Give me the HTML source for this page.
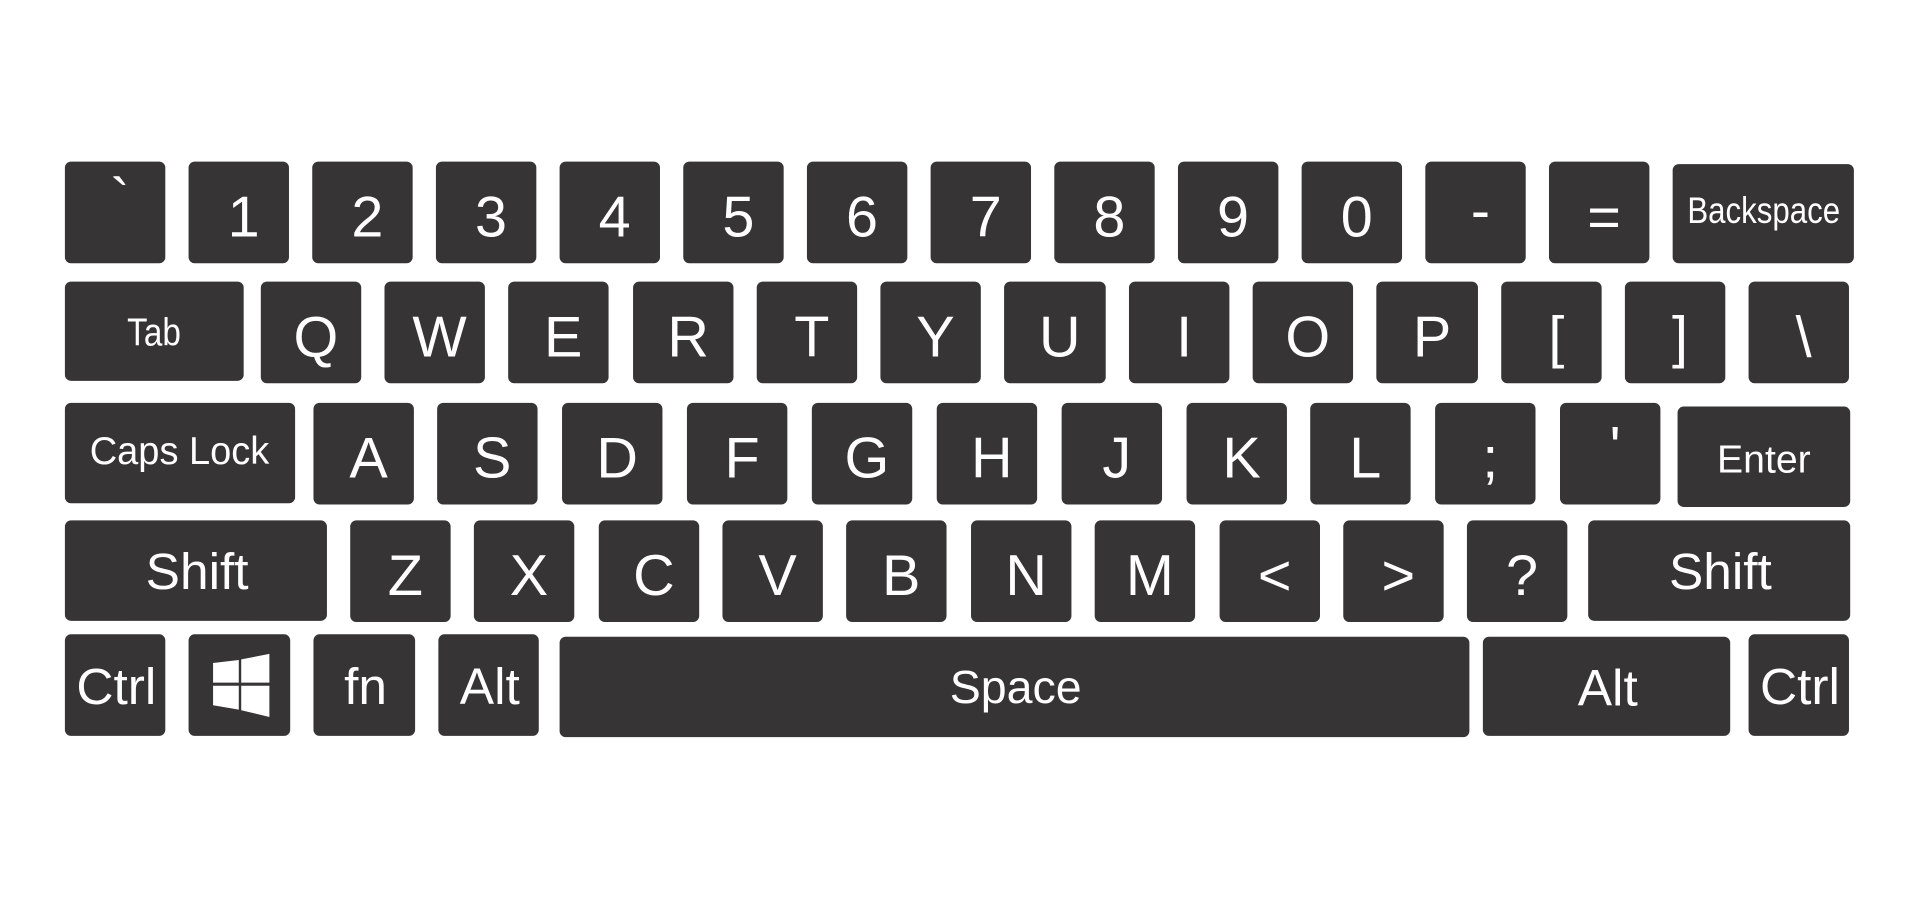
<!DOCTYPE html>
<html><head><style>
html,body{margin:0;padding:0;background:#fff;width:1920px;height:900px;overflow:hidden}
#w{position:absolute;left:0;top:0;width:1568px;height:735px;transform:scale(1.22449);transform-origin:0 0}
.k{position:absolute;background:#363435;border-radius:5px;color:#fff;display:flex;align-items:center;justify-content:center;font-family:"Liberation Sans",sans-serif;font-size:47px;line-height:1;box-sizing:border-box;padding:6px 0 0 8px}
.s{font-size:32px;padding:0}
.m{font-size:42px;padding:2px 0 0 2px}
.c{display:inline-block;transform:scaleX(.85)}
</style></head><body><div id="w">
<!-- row1 -->
<div class="k" style="left:53px;top:132px;width:82px;height:83px"><span style="margin-top:-28px">`</span></div>
<div class="k" style="left:154px;top:132px;width:82px;height:83px">1</div>
<div class="k" style="left:255px;top:132px;width:82px;height:83px">2</div>
<div class="k" style="left:356px;top:132px;width:82px;height:83px">3</div>
<div class="k" style="left:457px;top:132px;width:82px;height:83px">4</div>
<div class="k" style="left:558px;top:132px;width:82px;height:83px">5</div>
<div class="k" style="left:659px;top:132px;width:82px;height:83px">6</div>
<div class="k" style="left:760px;top:132px;width:82px;height:83px">7</div>
<div class="k" style="left:861px;top:132px;width:82px;height:83px">8</div>
<div class="k" style="left:962px;top:132px;width:82px;height:83px">9</div>
<div class="k" style="left:1063px;top:132px;width:82px;height:83px">0</div>
<div class="k" style="left:1164px;top:132px;width:82px;height:83px"><span style="margin-top:-10px">-</span></div>
<div class="k" style="left:1265px;top:132px;width:82px;height:83px">=</div>
<div class="k s" style="left:1366px;top:134px;width:148px;height:81px;font-size:30px"><span class="c" style="margin-top:-4px">Backspace</span></div>
<!-- row2 -->
<div class="k s" style="left:53px;top:230px;width:146px;height:81px"><span class="c">Tab</span></div>
<div class="k" style="left:213px;top:230px;width:82px;height:83px">Q</div>
<div class="k" style="left:314px;top:230px;width:82px;height:83px">W</div>
<div class="k" style="left:415px;top:230px;width:82px;height:83px">E</div>
<div class="k" style="left:517px;top:230px;width:82px;height:83px">R</div>
<div class="k" style="left:618px;top:230px;width:82px;height:83px">T</div>
<div class="k" style="left:719px;top:230px;width:82px;height:83px">Y</div>
<div class="k" style="left:820px;top:230px;width:83px;height:83px">U</div>
<div class="k" style="left:922px;top:230px;width:82px;height:83px">I</div>
<div class="k" style="left:1023px;top:230px;width:82px;height:83px">O</div>
<div class="k" style="left:1124px;top:230px;width:83px;height:83px">P</div>
<div class="k" style="left:1226px;top:230px;width:82px;height:83px">[</div>
<div class="k" style="left:1327px;top:230px;width:82px;height:83px">]</div>
<div class="k" style="left:1428px;top:230px;width:82px;height:83px">\</div>
<!-- row3 -->
<div class="k s" style="left:53px;top:329px;width:188px;height:82px"><span class="c" style="transform:scaleX(.97);margin-top:-4px">Caps Lock</span></div>
<div class="k" style="left:256px;top:329px;width:82px;height:83px">A</div>
<div class="k" style="left:357px;top:329px;width:82px;height:83px">S</div>
<div class="k" style="left:459px;top:329px;width:82px;height:83px">D</div>
<div class="k" style="left:561px;top:329px;width:82px;height:83px">F</div>
<div class="k" style="left:663px;top:329px;width:82px;height:83px">G</div>
<div class="k" style="left:765px;top:329px;width:82px;height:83px">H</div>
<div class="k" style="left:867px;top:329px;width:82px;height:83px">J</div>
<div class="k" style="left:969px;top:329px;width:82px;height:83px">K</div>
<div class="k" style="left:1070px;top:329px;width:82px;height:83px">L</div>
<div class="k" style="left:1172px;top:329px;width:82px;height:83px">;</div>
<div class="k" style="left:1274px;top:329px;width:82px;height:83px"><span style="margin-top:-18px">'</span></div>
<div class="k s" style="left:1370px;top:332px;width:141px;height:82px;padding-top:4px">Enter</div>
<!-- row4 -->
<div class="k m" style="left:53px;top:425px;width:214px;height:82px">Shift</div>
<div class="k" style="left:286px;top:425px;width:82px;height:83px">Z</div>
<div class="k" style="left:387px;top:425px;width:82px;height:83px">X</div>
<div class="k" style="left:489px;top:425px;width:82px;height:83px">C</div>
<div class="k" style="left:590px;top:425px;width:82px;height:83px">V</div>
<div class="k" style="left:691px;top:425px;width:82px;height:83px">B</div>
<div class="k" style="left:793px;top:425px;width:82px;height:83px">N</div>
<div class="k" style="left:894px;top:425px;width:82px;height:83px">M</div>
<div class="k" style="left:996px;top:425px;width:82px;height:83px">&lt;</div>
<div class="k" style="left:1097px;top:425px;width:82px;height:83px">&gt;</div>
<div class="k" style="left:1198px;top:425px;width:82px;height:83px">?</div>
<div class="k m" style="left:1297px;top:425px;width:214px;height:82px">Shift</div>
<!-- row5 -->
<div class="k m" style="left:53px;top:518px;width:82px;height:83px">Ctrl</div>
<div class="k" style="left:154px;top:518px;width:83px;height:83px;padding:0"><svg width="83" height="83" viewBox="0 0 83 83" style="position:absolute;left:0;top:0"><path fill="#fff" d="M20 23.5L41 21L41 39.5L20 39.5Z M43 20.5L66 16L66 39.5L43 39.5Z M20 42L41 42L41 61.5L20 58Z M43 42L66 42L66 67.5L43 62Z"/></svg></div>
<div class="k m" style="left:256px;top:518px;width:83px;height:83px">fn</div>
<div class="k m" style="left:358px;top:518px;width:82px;height:83px">Alt</div>
<div class="k m" style="left:457px;top:520px;width:743px;height:82px;font-size:38px">Space</div>
<div class="k m" style="left:1211px;top:520px;width:202px;height:81px">Alt</div>
<div class="k m" style="left:1428px;top:518px;width:82px;height:83px">Ctrl</div>
</div></body></html>
